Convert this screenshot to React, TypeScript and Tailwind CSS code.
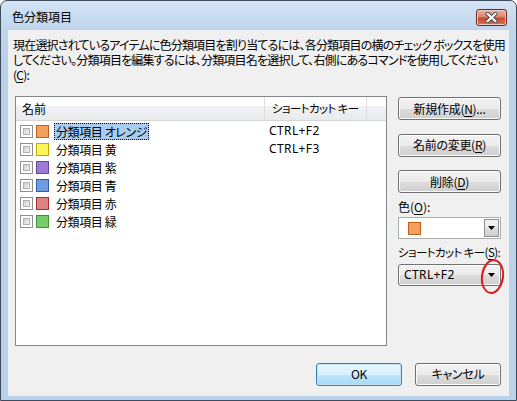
import React from 'react'

const font = "font-['Noto_Sans_CJK_JP','Noto_Sans',sans-serif] [font-feature-settings:'palt']"

const categories = [
  { name: '分類項目 オレンジ', fill: 'bg-[#f3a05c]', edge: 'border-[#c0601c]', key: 'CTRL+F2', selected: true },
  { name: '分類項目 黄', fill: 'bg-[#fbf65a]', edge: 'border-[#c4a800]', key: 'CTRL+F3' },
  { name: '分類項目 紫', fill: 'bg-[#9b7cd2]', edge: 'border-[#6545a2]', key: '' },
  { name: '分類項目 青', fill: 'bg-[#6f9be2]', edge: 'border-[#2f5fae]', key: '' },
  { name: '分類項目 赤', fill: 'bg-[#de8383]', edge: 'border-[#ae2d2d]', key: '' },
  { name: '分類項目 緑', fill: 'bg-[#77cd6c]', edge: 'border-[#3b952f]', key: '' },
]

function Mnemonic({ pre, k, post = ')' }: { pre: string; k: string; post?: string }) {
  return (
    <>
      {pre}(<span className="underline underline-offset-2">{k}</span>{post}
    </>
  )
}

function Button({ children, primary }: { children: React.ReactNode; primary?: boolean }) {
  return (
    <button
      className={
        'h-[23px] w-full rounded-[3px] border text-[12px] leading-none tracking-[-0.3px] text-black ' +
        (primary
          ? 'border-[#3c7fb1] bg-[linear-gradient(to_bottom,#eaf6fd_0%,#d9f0fc_50%,#bee6fd_51%,#a7d9f5_100%)] shadow-[inset_0_0_0_1px_#c3e4f6]'
          : 'border-[#707070] bg-[linear-gradient(to_bottom,#f2f2f2_0%,#ebebeb_50%,#dddddd_51%,#cfcfcf_100%)] shadow-[inset_0_0_0_1px_#fcfcfc]')
      }
    >
      {children}
    </button>
  )
}

function Arrow() {
  return (
    <svg width="7" height="4" viewBox="0 0 7 4">
      <path d="M0 0h7L3.5 4z" fill="#000" />
    </svg>
  )
}

function Checkbox() {
  return (
    <div className="h-[13px] w-[13px] shrink-0 border border-[#8e8f8f] bg-white p-[2px]">
      <div className="h-full w-full border border-[#aeb2b8] bg-gradient-to-br from-[#c9cdd3] to-[#f4f4f4]" />
    </div>
  )
}

export default function App() {
  return (
    <div className={`relative h-[401px] w-[517px] overflow-hidden bg-white text-black ${font}`}>
      <div className="flex h-full flex-col rounded-t-[7px] border border-[#3e4b5b] bg-[linear-gradient(to_bottom,#d3e3f4_0px,#bfd5ec_30px,#b9d1ea_60px)]">
        {/* Title bar */}
        <div className="flex h-[29px] shrink-0 items-start">
          <span className="ml-[11px] mt-[8px] text-[12px] leading-[16px]">色分類項目</span>
          <div className="ml-auto mr-[9px] mt-[8px] flex h-[17px] w-[31px] items-center justify-center rounded-[3px] border border-[#6e2b20] bg-[linear-gradient(to_bottom,#eab4a6_0%,#d98672_45%,#c6472e_55%,#d2755c_100%)] shadow-[inset_0_0_0_1px_#f1c6bb]">
            <svg width="13" height="11" viewBox="0 0 13 11">
              <path
                d="M2.5 1.8L10.5 9.2M10.5 1.8L2.5 9.2"
                stroke="#4a4a4a"
                strokeWidth="4"
                strokeLinecap="round"
                fill="none"
              />
              <path d="M2.5 1.8L10.5 9.2M10.5 1.8L2.5 9.2" stroke="#fff" strokeWidth="2.2" strokeLinecap="round" />
            </svg>
          </div>
        </div>

        {/* Client area */}
        <div className="mx-[7px] mb-[7px] flex flex-1 flex-col bg-[#f0f0f0] pb-[10px] pl-[7px] pr-[8px] pt-[7px]">
          <p className="-ml-[2px] whitespace-nowrap text-[12px] leading-[15px] tracking-[-0.8px]">
            現在選択されているアイテムに色分類項目を割り当てるには、各分類項目の横のチェック ボックスを使用
            <br />
            してください。分類項目を編集するには、分類項目名を選択して、右側にあるコマンドを使用してください
            <br />
            (<span className="underline underline-offset-2">C</span>):
          </p>

          <div className="mt-[14px] flex">
            {/* Category list */}
            <div className="h-[250px] w-[372px] shrink-0 overflow-hidden border border-[#828790] bg-white">
              <div className="flex h-[24px] border-b border-[#d5d5d5] bg-[linear-gradient(to_bottom,#ffffff_0%,#ffffff_40%,#f1f2f4_41%,#e9eaec_100%)] text-[12px] leading-[23px]">
                <div className="w-[249px] shrink-0 border-r border-[#dcdcdc] pl-[6px]">名前</div>
                <div className="w-[102px] shrink-0 whitespace-nowrap border-r border-[#dcdcdc] pl-[7px] text-[11.5px] tracking-[-0.6px]">
                  ショートカット キー
                </div>
              </div>
              <div className="pt-[1px]">
                {categories.map((c) => (
                  <div key={c.name} className="flex h-[18px] items-center text-[12px]">
                    <div className="flex w-[249px] shrink-0 items-center pl-[4px]">
                      <Checkbox />
                      <div className={`ml-[3px] h-[13px] w-[13px] shrink-0 border ${c.fill} ${c.edge}`} />
                      <span
                        className={
                          'ml-[5px] h-[17px] whitespace-nowrap px-[1px] leading-[16px] tracking-[-0.4px] ' +
                          (c.selected ? 'border border-dotted border-black bg-[#a9cdf1]' : 'border border-transparent')
                        }
                      >
                        {c.name}
                      </span>
                    </div>
                    <div className="w-[102px] shrink-0 pl-[4px] font-['Noto_Sans',sans-serif] leading-[16px] tracking-[0.4px]">
                      {c.key}
                    </div>
                  </div>
                ))}
              </div>
            </div>

            {/* Command column */}
            <div className="ml-[11px] flex w-[103px] shrink-0 flex-col pt-[1px]">
              <Button>
                <Mnemonic pre="新規作成" k="N" post=")..." />
              </Button>
              <div className="mt-[11px]">
                <Button>
                  <Mnemonic pre="名前の変更" k="R" />
                </Button>
              </div>
              <div className="mt-[11px]">
                <Button>
                  <Mnemonic pre="削除" k="D" />
                </Button>
              </div>
              <div className="mt-[6px] text-[12px] leading-[15px]">
                色(<span className="underline underline-offset-2">O</span>):
              </div>
              <div className="mt-[3px] flex h-[22px] items-stretch border border-[#abadb3] bg-white">
                <div className="flex flex-1 items-center pl-[9px]">
                  <div className="h-[13px] w-[13px] border border-[#c0601c] bg-[#f3a05c]" />
                </div>
                <div className="m-[1px] flex w-[15px] items-center justify-center border border-[#8e8f8f] bg-[linear-gradient(to_bottom,#f2f2f2_0%,#ebebeb_50%,#dddddd_51%,#cfcfcf_100%)]">
                  <Arrow />
                </div>
              </div>
              <div className="mt-[6px] whitespace-nowrap text-[11.5px] leading-[15px] tracking-[-0.6px]">
                ショートカット キー(<span className="underline underline-offset-2">S</span>):
              </div>
              <div className="relative mt-[4px]">
                <div className="flex h-[22px] items-center rounded-[3px] border border-[#707070] bg-[linear-gradient(to_bottom,#f2f2f2_0%,#ebebeb_50%,#dddddd_51%,#cfcfcf_100%)] pl-[5px] pr-[5px] text-[12px] shadow-[inset_0_0_0_1px_#fcfcfc]">
                  <span className="flex-1 font-['Noto_Sans',sans-serif] tracking-[0.4px]">CTRL+F2</span>
                  <Arrow />
                </div>
                <div className="absolute left-[83px] top-[-5px] h-[35px] w-[23px] rotate-[8deg] rounded-[50%] border-2 border-[#e8141c]" />
              </div>
            </div>
          </div>

          {/* Dialog buttons */}
          <div className="mt-[14px] flex justify-end gap-[13px]">
            <div className="w-[86px]">
              <Button primary>OK</Button>
            </div>
            <div className="w-[86px]">
              <Button>キャンセル</Button>
            </div>
          </div>
        </div>
      </div>
    </div>
  )
}
